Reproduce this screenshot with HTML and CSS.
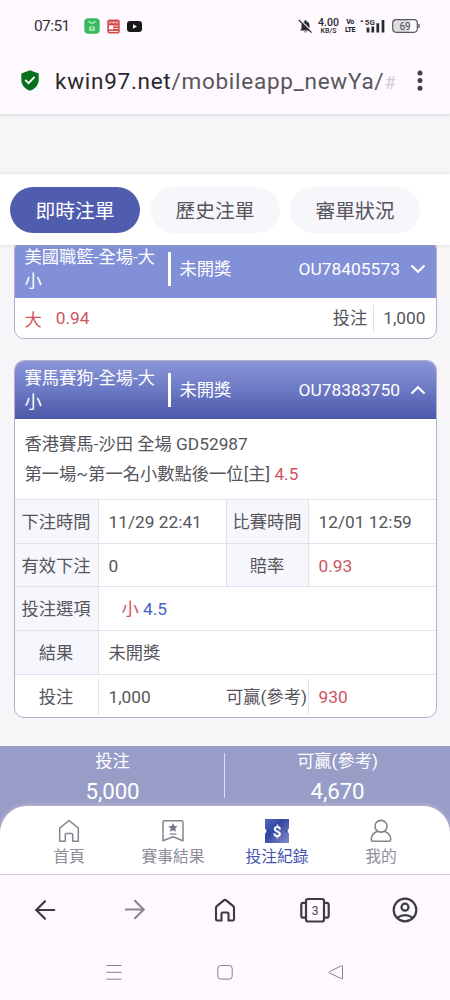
FILE: index.html
```html
<!DOCTYPE html>
<html lang="zh-Hant">
<head>
<meta charset="utf-8">
<title>投注紀錄</title>
<link rel="stylesheet" href="styles.css">
</head>
<body>
<div class="phone">
  <header class="browser-top">
    <div class="status">
      <span class="clock">07:51</span>
      <div class="notifications">
        <svg width="16" height="16" viewBox="0 0 16 16"><rect x=".3" y=".3" width="15.4" height="15.4" rx="4" fill="#38b95d"/><path d="M5 2.8q0 2.4 3 2.4t3-2.4" fill="none" stroke="#b3edbf" stroke-width="1.2"/><rect x="5" y="8.2" width="6" height="4.8" rx="1" fill="#a5e8b3"/><path d="M6.4 10h3.2M8 8.5v4" stroke="#4dbd68" stroke-width=".8"/></svg>
        <svg width="13" height="15" viewBox="0 0 13 15"><rect x=".3" y=".5" width="12.4" height="14" rx="2" fill="#d34a4c"/><path d="M2 3.500h9M3 2v3M6.500 2v3M10 2v3" stroke="#f5b0af" stroke-width=".9" fill="none"/><rect x="2" y="6.400" width="4.400" height="4" fill="#fff"/><path d="M7.200 7h4M7.200 9.500h4M2 12.500h9" stroke="#ffe0de" stroke-width="1.1"/></svg>
        <svg width="15" height="11" viewBox="0 0 15 11"><rect width="15" height="11" rx="3" fill="#19181b"/><path d="M6 3.2v4.6l4-2.3z" fill="#fff"/></svg>
      </div>
      <div class="signals">
        <svg width="15" height="15" viewBox="0 0 15 15"><path d="M2 11.5 3.5 9.7V6.5A4 4 0 0 1 6.6 2.6V1.3h1.8v1.3a4 4 0 0 1 3.1 3.9v3.2L13 11.5z" fill="#29282b"/><path d="M6 12.5h3q-1.500 2-3 0z" fill="#29282b"/><path d="m1.700.4 12.500 12.300" stroke="#fdf9fe" stroke-width="1.3"/><path d="m.8 1 12.700 12.600" stroke="#29282b" stroke-width="1.2"/></svg>
        <span class="speed"><b>4.00</b><small>KB/S</small></span>
        <span class="volte"><span>Vo</span><span>LTE</span></span>
        <svg class="bars" width="25" height="16" viewBox="0 0 25 16"><path d="m.3 4 1.600-2.300L3.500 4z" fill="#343336"/><text x="4.800" y="7" class="five-g">5G</text><path d="M8 9.500v5M12.800 8.500v6M17.800 5.300v9.200M23 2v12.500" stroke="#29282b" stroke-width="2.700"/></svg>
        <svg class="battery" width="28" height="14" viewBox="0 0 28 14"><rect x="1" y="1" width="17" height="12" rx="3" fill="#dedde0"/><rect x=".7" y=".7" width="24.600" height="12.600" rx="3.500" fill="none" stroke="#59585b" stroke-width="1.200"/><path d="M27 5v4" stroke="#59585b" stroke-width="1.400"/><text x="13" y="10.500" text-anchor="middle" class="charge">69</text></svg>
      </div>
    </div>
    <div class="address">
      <svg class="shield" width="18" height="21" viewBox="0 0 18 21"><path d="M9 .3 17.700 3.500v6.300c0 5-3.500 9.300-8.700 10.900C3.800 19.100.3 14.800.3 9.800V3.500z" fill="#08701e"/><path d="m4.300 9.900 3.300 3.300 6-6.400" fill="none" stroke="#fff" stroke-width="1.900"/></svg>
      <div class="url"><span>kwin97.net</span>/mobileapp_newYa/<i>#</i></div>
      <svg class="more" width="6" height="22" viewBox="0 0 6 22"><g fill="#414044"><circle cx="3" cy="3" r="2.500"/><circle cx="3" cy="10.600" r="2.500"/><circle cx="3" cy="18.200" r="2.500"/></g></svg>
    </div>
  </header>

  <nav class="tabs">
    <a class="tab active">即時注單</a>
    <a class="tab">歷史注單</a>
    <a class="tab">審單狀況</a>
  </nav>

  <main class="tickets">
    <article class="ticket folded">
      <div class="ticket-head">
        <span class="game">美國職籃-全場-大小</span><span class="state">未開獎</span><span class="code">OU78405573</span>
        <svg width="16" height="10" viewBox="0 0 16 10"><path d="m1.500 1.500 6.500 6.300 6.500-6.300" fill="none" stroke="#fff" stroke-width="2.200"/></svg>
      </div>
      <div class="brief"><span class="red">大</span><span class="red odds">0.94</span><span class="stake">投注</span><span class="amount">1,000</span></div>
    </article>

    <article class="ticket">
      <div class="ticket-head open">
        <span class="game">賽馬賽狗-全場-大小</span><span class="state">未開獎</span><span class="code">OU78383750</span>
        <svg width="16" height="10" viewBox="0 0 16 10"><path d="m1.500 8.500 6.500-6.300 6.500 6.300" fill="none" stroke="#fff" stroke-width="2.200"/></svg>
      </div>
      <div class="intro"><p>香港賽馬-沙田 全場 GD52987</p><p>第一場~第一名小數點後一位[主] <span class="red">4.5</span></p></div>
      <div class="row"><span class="label">下注時間</span><span class="value">11/29 22:41</span><span class="label second">比賽時間</span><span class="value last">12/01 12:59</span></div>
      <div class="row"><span class="label">有效下注</span><span class="value">0</span><span class="label second">賠率</span><span class="value last red">0.93</span></div>
      <div class="row"><span class="label">投注選項</span><span class="value choice"><span class="red">小</span> <span class="blue">4.5</span></span></div>
      <div class="row"><span class="label">結果</span><span class="value">未開獎</span></div>
      <div class="row total"><span class="label">投注</span><span class="value">1,000</span><span class="label second">可贏(參考)</span><span class="value last red">930</span></div>
    </article>
  </main>

  <section class="bottom">
    <div class="summary">
      <div class="sum"><span>投注</span><strong>5,000</strong></div>
      <div class="sum"><span>可贏(參考)</span><strong>4,670</strong></div>
    </div>
    <nav class="app-nav">
      <a><svg width="24" height="24" viewBox="0 0 24 24"><path d="M2.700 9.200 12 1.500l9.300 7.700v13h-5.600v-6.600q0-1-1-1H9.300q-1 0-1 1v6.600H2.700z" fill="none" stroke="#85838f" stroke-width="1.500" stroke-linejoin="round"/></svg>首頁</a>
      <a><svg width="24" height="24" viewBox="0 0 24 24"><path d="M3.500 1.800h17q1.500 0 1.500 1.500v18.500l-10-4-10 4V3.300q0-1.500 1.500-1.500z" fill="none" stroke="#85838f" stroke-width="1.500" stroke-linejoin="round"/><path d="m12 4 1.400 2.900 3.200.4-2.300 2.200.6 3.200-2.900-1.500-2.900 1.500.6-3.200-2.300-2.200 3.200-.4z" fill="#777986"/><path d="M8.500 15h7" stroke="#85838f" stroke-width="1.300"/></svg>賽事結果</a>
      <a class="current"><svg width="24" height="24" viewBox="0 0 24 24"><defs><linearGradient id="voucher" x1="0" y1="0" x2="1" y2="1"><stop stop-color="#5369c1"/><stop offset=".4" stop-color="#3345a2"/><stop offset="1" stop-color="#8790cc"/></linearGradient></defs><path d="M0 0h24v9.500l-2.500 2.500 2.500 2.500V24H0v-9.500L2.500 12 0 9.500z" fill="url(#voucher)"/><path d="M1.600 10.200 3.500 12l-1.900 1.800M22.400 10.200 20.500 12l1.900 1.800" fill="#1c2c78"/><text x="12" y="17.500" text-anchor="middle" class="dollar">$</text></svg>投注紀錄</a>
      <a><svg width="24" height="24" viewBox="0 0 24 24"><path d="M8.500 12.200a6 6 0 1 1 7 0" fill="none" stroke="#85838f" stroke-width="1.600"/><path d="M8.500 12.200q3.500 1.800 7 0c3.900 1.500 6.200 4.600 6.200 8v.6q0 1.400-1.400 1.400H3.700q-1.400 0-1.400-1.400v-.6c0-3.400 2.300-6.500 6.200-8z" fill="none" stroke="#85838f" stroke-width="1.600"/></svg>我的</a>
    </nav>
  </section>

  <footer class="system">
    <div class="browser-nav">
      <svg width="28" height="28" viewBox="0 0 28 28"><path d="M23.200 14H5M14 5.300 5.300 14l8.700 8.700" fill="none" stroke="#3c3b3f" stroke-width="2.200" stroke-linecap="round" stroke-linejoin="round"/></svg>
      <svg width="28" height="28" viewBox="0 0 28 28"><path d="M4.800 13.500H23M14 4.800l8.700 8.700-8.700 8.700" fill="none" stroke="#89868c" stroke-width="2" stroke-linecap="round" stroke-linejoin="round"/></svg>
      <svg width="28" height="28" viewBox="0 0 28 28"><path d="M5 11.800q0-1 .8-1.700l7-5.700q1.200-1 2.400 0l7 5.700q.8.700.8 1.700v11.400q0 1.300-1.300 1.300h-4.200v-6.700q0-1.300-1.300-1.300h-4.400q-1.300 0-1.300 1.300v6.700H6.300Q5 24.500 5 23.200z" fill="none" stroke="#3c3b3f" stroke-width="2.100"/></svg>
      <svg width="32" height="28" viewBox="0 0 32 28"><rect x="7" y="3" width="18" height="22.500" rx="2" fill="none" stroke="#3c3b3f" stroke-width="2.200"/><path d="M7 6.800H4.300q-2 0-2 2v10.900q0 2 2 2H7M25 6.800h2.700q2 0 2 2v10.900q0 2-2 2H25" fill="none" stroke="#3c3b3f" stroke-width="2.200"/><text x="16" y="18.700" text-anchor="middle" class="tab-count">3</text></svg>
      <svg width="28" height="28" viewBox="0 0 28 28"><g fill="none" stroke="#3c3b3f" stroke-width="2.200"><circle cx="14" cy="14" r="11.300"/><circle cx="14" cy="11.200" r="3.500"/><path d="M6.500 21.700q7.500-5 15 0"/></g></svg>
    </div>
    <div class="gestures">
      <svg width="16" height="18" viewBox="0 0 16 18"><path d="M.5 2.500h15M.5 9.300h15M.5 16.200h15" stroke="#858287" stroke-width="1"/></svg>
      <svg width="16" height="18" viewBox="0 0 16 18"><rect x=".8" y="2.500" width="14.400" height="13.600" rx="3" fill="none" stroke="#858287" stroke-width="1"/></svg>
      <svg width="16" height="18" viewBox="0 0 16 18"><path d="M14.500 3.200v12q0 1-1 .5L1.500 10q-1-.7 0-1.300l12-6q1-.5 1 .5z" fill="none" stroke="#858287" stroke-width="1"/></svg>
    </div>
  </footer>
</div>
</body>
</html>
```
FILE: styles.css
```css
* { box-sizing: border-box; }
body { margin: 0; font-family: Roboto, "Noto Sans CJK TC", sans-serif; color: #56555c; }
svg { display: block; flex: none; }
p { margin: 0; }
.phone { width: 450px; height: 1000px; display: flex; flex-direction: column; background: #f6f6f8; overflow: hidden; }

.browser-top { height: 114px; flex: none; background: #fdf9fe; box-shadow: 0 1px 3px #aaa9ad80; }
.status { height: 52px; display: flex; align-items: center; padding-left: 34px; }
.clock { width: 50px; font-size: 15.5px; letter-spacing: -.6px; color: #343337; }
.notifications { display: flex; align-items: center; gap: 7px; width: 214px; }
.signals { display: flex; align-items: center; }
.speed { display: flex; flex-direction: column; align-items: center; width: 25px; margin-left: 3px; color: #29282b; }
.speed b { font-size: 10.5px; line-height: 9px; font-weight: 500; }
.speed small { font-size: 7px; line-height: 8px; font-weight: 500; }
.volte { display: flex; flex-direction: column; align-items: center; width: 12px; margin-left: 3px; font-size: 7px; line-height: 8px; font-weight: 800; color: #29282b; letter-spacing: -.4px; }
.bars { margin-left: 4px; }
.battery { margin-left: 7px; }
.five-g { font-size: 8px; font-weight: 700; fill: #343336; }
.charge { font-size: 10px; fill: #49484b; }
.address { height: 57px; display: flex; align-items: center; padding-left: 21px; }
.url { width: 347px; margin-left: 16px; font-size: 22.5px; letter-spacing: .73px; color: #57555b; white-space: nowrap; }
.url span { color: #29282c; }
.url i { font-style: normal; font-size: 18px; color: #d0ccd2; }
.more { margin-left: 15px; }

.tabs { height: 71px; flex: none; margin-top: 60px; display: flex; align-items: center; gap: 10px; padding: 0 10px; background: #fff; box-shadow: 0 0 4px #b5b5bd80; position: relative; z-index: 1; }
.tab { width: 130px; height: 46px; border-radius: 23px; display: flex; align-items: center; justify-content: center; background: #f7f7fb; font-size: 19.8px; }
.tab.active { background: #505dae; color: #fff; }

.tickets { height: 501px; flex: none; padding: 0 13.5px; overflow: hidden; }
.ticket { width: 423px; border: 1.5px solid #b3b0cb; border-radius: 10px; background: #fff; overflow: hidden; font-size: 17.3px; }
.folded { height: 100px; margin: -6px 0 21px; }
.ticket-head { height: 59px; margin: -1px -1px 0; display: flex; align-items: center; padding: 0 10px 0 11px; background: #8290d7; color: #fff; }
.ticket-head.open { background: linear-gradient(#8c97d9, #6c79c4 50%, #4d58a8); }
.game { width: 143px; height: 58px; padding: 5px 5px 0 0; line-height: 24px; }
.state { height: 34px; width: 131px; padding-left: 9px; border-left: 3px solid #fff; line-height: 34px; }
.code { width: 104px; font-size: 17.4px; margin-right: 7px; }
.brief { height: 40px; display: flex; align-items: center; padding: 0 10px; }
.red { color: #d0535f; }
.blue { color: #4961c5; }
.odds { margin-left: 14px; }
.stake { margin-left: auto; padding-right: 6px; line-height: 27px; border-right: 1px solid #e1dfea; }
.amount { padding-left: 9px; }
.intro { height: 80px; padding: 10px; line-height: 30px; }
.row { height: 43.7px; display: flex; border-top: 1.5px solid #e2e1ec; line-height: 45px; }
.label { width: 84px; flex: none; border-right: 1px solid #e2e1ec; background: #f6f7fc; text-align: center; white-space: nowrap; }
.value { width: 127px; padding-left: 10px; white-space: nowrap; }
.second { width: 83px; border-left: 1px solid #e2e1ec; }
.choice { padding-left: 23px; }
.total .label { background: none; height: 36px; margin-top: 4px; line-height: 37px; }
.total .second { border-left: none; }

.bottom { height: 128px; flex: none; background: #979dc7; }
.summary { height: 60px; display: flex; color: #fff; }
.sum { width: 225px; padding-top: 1px; display: flex; flex-direction: column; align-items: center; font-size: 17.3px; line-height: 29px; position: relative; }
.sum strong { font-size: 22.3px; font-weight: 400; line-height: 30px; letter-spacing: -.1px; }
.sum:first-child::after { content: ""; position: absolute; right: 0; top: 7px; height: 45px; border-right: 1.5px solid #d9dcef; }
.app-nav { height: 68px; background: #fff; border-radius: 27px 27px 0 0; box-shadow: 0 -1px 4px #c7b9d4; display: flex; padding: 0 17px; }
.app-nav a { width: 104px; padding-top: 13px; display: flex; flex-direction: column; align-items: center; font-size: 15.8px; line-height: 28px; color: #8f8e98; }
.app-nav .current { color: #4353af; }
.dollar { font-size: 15px; font-weight: 700; fill: #fff; }

.system { height: 126px; flex: none; border-top: 1px solid #d2d0d4; background: #fdf9fe; }
.browser-nav { height: 70px; display: grid; grid-template-columns: repeat(5, 90px); align-items: center; justify-items: center; }
.tab-count { font-size: 12px; fill: #49484c; }
.gestures { height: 54px; display: flex; align-items: center; justify-content: space-between; padding: 0 106px; }
```
